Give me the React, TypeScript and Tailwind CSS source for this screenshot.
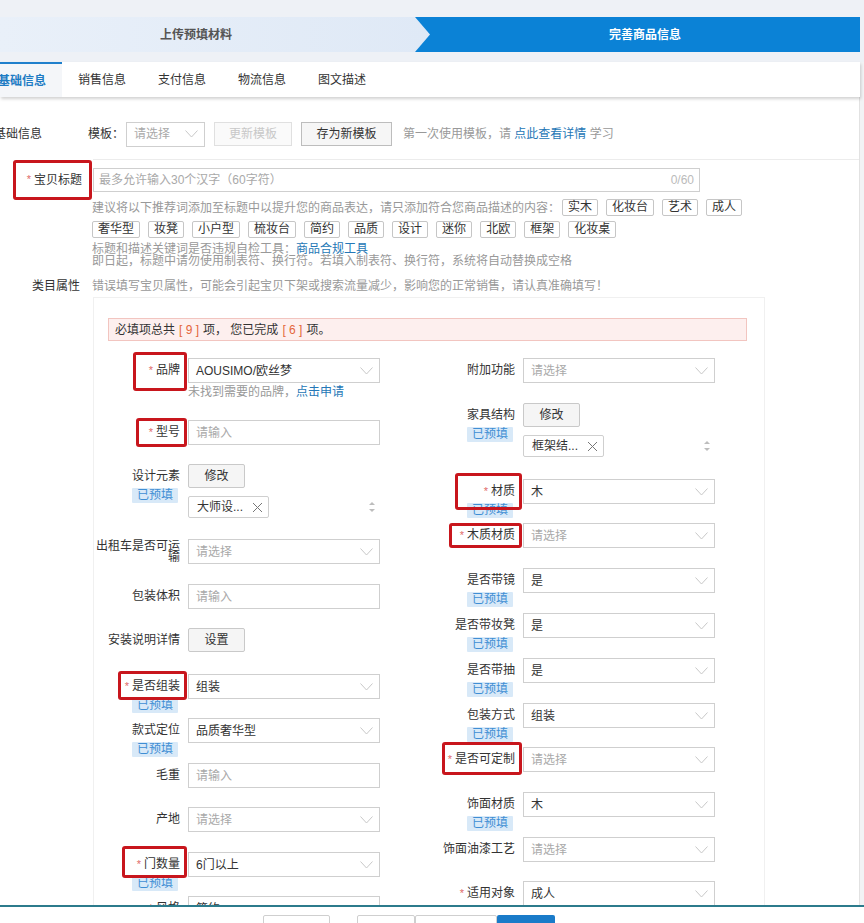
import React from "react";

type FieldDef = {
  label: string;
  req?: boolean;
  pre?: boolean;
  kind?: "select" | "input" | "button" | "multi";
  value?: string;
  btn?: string;
  tag?: string;
  note?: boolean;
  wrap?: boolean;
  h?: string;
  mark?: string;
};

const leftFields: FieldDef[] = [
  { label: "品牌", req: true, value: "AOUSIMO/欧丝梦", note: true, h: "h-[62px]", mark: "top-[-6px] h-[39px] w-[54px]" },
  { label: "型号", req: true, kind: "input", h: "h-[44px]", mark: "top-[-2px] h-[29px] w-[51px]" },
  { label: "设计元素", pre: true, kind: "multi", tag: "大师设...", h: "h-[75px]" },
  { label: "出租车是否可运输", wrap: true, h: "h-[45px]" },
  { label: "包装体积", kind: "input", h: "h-[44px]" },
  { label: "安装说明详情", kind: "button", btn: "设置", h: "h-[46px]" },
  { label: "是否组装", req: true, pre: true, value: "组装", h: "h-[44px]", mark: "top-[-3px] h-[29px] w-[69px]" },
  { label: "款式定位", pre: true, value: "品质奢华型", h: "h-[45px]" },
  { label: "毛重", kind: "input", h: "h-[44px]" },
  { label: "产地", h: "h-[45px]" },
  { label: "门数量", req: true, pre: true, value: "6门以上", h: "h-[44px]", mark: "top-[-6px] h-[32px] w-[65px]" },
  { label: "风格", req: true, value: "简约" },
];

const rightFields: FieldDef[] = [
  { label: "附加功能", h: "h-[45px]" },
  { label: "家具结构", pre: true, kind: "multi", tag: "框架结...", h: "h-[76px]" },
  { label: "材质", req: true, pre: true, value: "木", h: "h-[44px]", mark: "top-[-6px] h-[37px] w-[67px]" },
  { label: "木质材质", req: true, h: "h-[45px]", mark: "top-0 h-[25px] w-[73px]" },
  { label: "是否带镜", pre: true, value: "是", h: "h-[45px]" },
  { label: "是否带妆凳", pre: true, value: "是", h: "h-[45px]" },
  { label: "是否带抽", pre: true, value: "是", h: "h-[45px]" },
  { label: "包装方式", pre: true, value: "组装", h: "h-[44px]" },
  { label: "是否可定制", req: true, h: "h-[45px]", mark: "top-[-5px] h-[33px] w-[80px]" },
  { label: "饰面材质", pre: true, value: "木", h: "h-[45px]" },
  { label: "饰面油漆工艺", h: "h-[44px]" },
  { label: "适用对象", req: true, value: "成人" },
];

const tags1 = ["实木", "化妆台", "艺术", "成人"];
const tags2 = ["奢华型", "妆凳", "小户型", "梳妆台", "简约", "品质", "设计", "迷你", "北欧", "框架", "化妆桌"];
const tabs = ["基础信息", "销售信息", "支付信息", "物流信息", "图文描述"];

function Chevron() {
  return (
    <svg width="13" height="8" viewBox="0 0 13 8" className="shrink-0">
      <polyline points="0.5,0.5 6.5,7 12.5,0.5" fill="none" stroke="#c8c8c8" strokeWidth="1" />
    </svg>
  );
}

function Select({ value, w = "w-[192px]" }: { value?: string; w?: string }) {
  return (
    <div className={`flex h-[25px] ${w} items-center justify-between border border-[#cfcfcf] bg-white pl-[7px] pr-[6px]`}>
      <span className={value ? "text-[#333]" : "text-[#a9a9a9]"}>{value ?? "请选择"}</span>
      <Chevron />
    </div>
  );
}

function Input({ placeholder = "请输入" }: { placeholder?: string }) {
  return (
    <div className="flex h-[25px] w-[192px] items-center border border-[#cfcfcf] bg-white px-[7px] text-[#a9a9a9]">{placeholder}</div>
  );
}

function Btn({ children }: { children: React.ReactNode }) {
  return (
    <div className="flex h-[24px] w-[57px] items-center justify-center rounded-[2px] border border-[#c9c9c9] bg-[#f5f5f5] text-[#333]">
      {children}
    </div>
  );
}

function Badge() {
  return (
    <div className="-mt-[1px] flex justify-end pr-[2px]">
      <span className="h-[15px] rounded-[1px] bg-[#d8e9f8] px-[5px] text-[12px] leading-[15px] text-[#3f8ed4]">已预填</span>
    </div>
  );
}

function Field({ f }: { f: FieldDef }) {
  const kind = f.kind ?? "select";
  return (
    <div className={`flex ${f.h ?? "h-[45px]"}`}>
      <div className="relative w-[85px] shrink-0">
        <div
          className={`flex h-[25px] items-center justify-end text-right text-[#333] ${
            f.wrap ? "leading-[11px]" : "leading-[25px]"
          }`}
        >
          {f.req && <span className="mr-[3px] text-[11px] text-[#e06a6a]">*</span>}
          {f.label}
        </div>
        {f.pre && <Badge />}
        {f.mark && (
          <span
            className={`pointer-events-none absolute right-[-7px] z-10 rounded-[3px] border-[3px] border-[#c8161d] ${f.mark}`}
          />
        )}
      </div>
      <div className="ml-2 w-[192px]">
        {kind === "select" && <Select value={f.value} />}
        {kind === "input" && <Input />}
        {kind === "button" && <Btn>{f.btn}</Btn>}
        {kind === "multi" && (
          <div>
            <Btn>修改</Btn>
            <div className="mt-[8px] flex items-center justify-between">
              <div className="flex h-[22px] w-[81px] items-center justify-between rounded-[2px] border border-[#cfcfcf] bg-white pl-[8px] pr-[5px] text-[#333]">
                <span>{f.tag}</span>
                <svg width="11" height="11" viewBox="0 0 11 11">
                  <path d="M1 1L10 10M10 1L1 10" stroke="#777" strokeWidth="1" />
                </svg>
              </div>
              <svg width="8" height="14" viewBox="0 0 8 14" className="mr-[4px]">
                <path d="M4 2L7 5H1Z" fill="#bdbdbd" />
                <path d="M4 12L7 9H1Z" fill="#bdbdbd" />
              </svg>
            </div>
          </div>
        )}
        {f.note && (
          <div className="mt-[2px] leading-[14px] text-[#999]">
            未找到需要的品牌，<span className="text-[#2577b6]">点击申请</span>
          </div>
        )}
      </div>
    </div>
  );
}

function Tag({ t }: { t: string }) {
  return (
    <span className="inline-flex h-[17px] items-center rounded-[2px] border border-[#c6c6c6] bg-white px-[5px] leading-[15px] text-[#333]">
      {t}
    </span>
  );
}

export default function App() {
  return (
    <div className="flex h-[923px] w-[864px] flex-col overflow-hidden bg-[#f2f3f5] font-['Liberation_Sans','Noto_Sans_CJK_SC',sans-serif] text-[12px] text-[#333]">
      <div className="min-h-0 flex-1 overflow-hidden">
        {/* steps */}
        <div className="h-[62px] bg-[#eef1f6] pt-[17px]">
          <div className="flex h-[35px] w-[860px] bg-[#0b82d6]">
            <div className="flex w-[430px] shrink-0 items-center bg-gradient-to-r from-[#e9f0f9] to-[#dfe9f6] pl-[160px] font-semibold text-[#555] [clip-path:polygon(0_0,415px_0,430px_50%,415px_100%,0_100%)]">
              上传预填材料
            </div>
            <div className="flex flex-1 items-center justify-center font-bold text-white">完善商品信息</div>
          </div>
        </div>

        {/* tabs */}
        <div className="relative z-10 flex h-[35px] w-[860px] overflow-hidden bg-white shadow-[1px_2px_3px_rgba(0,0,0,0.18)]">
          <div className="-ml-[18px] flex">
            {tabs.map((t, i) => (
              <div
                key={t}
                className={`flex items-center px-4 ${
                  i === 0
                    ? "border-t-2 border-[#1f80cc] bg-[#f4f6f9] font-bold text-[#1e7cc4]"
                    : "text-[#333]"
                }`}
              >
                {t}
              </div>
            ))}
          </div>
        </div>

        {/* body */}
        <div className="h-[1000px] w-[860px] overflow-hidden border-r border-[#e2e2e2] bg-white pt-[25px]">
          <div className="flex h-[24px] items-center">
            <span className="-ml-[6px] w-[94px] shrink-0 whitespace-nowrap">基础信息</span>
            <span>模板：</span>
            <div className="ml-[2px]">
              <Select w="w-[79px]" />
            </div>
            <div className="ml-[9px] flex h-[24px] w-[78px] items-center justify-center border border-[#e0e0e0] bg-[#fafafa] text-[#c8c8c8]">
              更新模板
            </div>
            <div className="ml-[9px] flex h-[24px] w-[91px] items-center justify-center border border-[#bdbdbd] bg-[#f6f6f6] text-[#333]">
              存为新模板
            </div>
            <span className="ml-[11px] text-[#999]">
              第一次使用模板，请 <span className="text-[#2577b6]">点此查看详情</span> 学习
            </span>
          </div>

          <div className="ml-[93px] mt-[13px] h-px bg-[#ececec]" />

          <div className="mt-[8px] flex h-[24px] items-center">
            <div className="relative flex w-[82px] shrink-0 justify-end">
              <span className="mr-[3px] text-[11px] text-[#e06a6a]">*</span>
              宝贝标题
              <span className="pointer-events-none absolute right-[-10px] top-[-11px] h-[40px] w-[79px] rounded-[3px] border-[3px] border-[#c8161d]" />
            </div>
            <div className="ml-[11px] flex h-[24px] w-[607px] items-center justify-between border border-[#cfcfcf] px-[5px] text-[#a9a9a9]">
              <span>最多允许输入30个汉字（60字符）</span>
              <span className="text-[#bbb]">0/60</span>
            </div>
          </div>

          <div className="ml-[92px] mt-[7px] text-[#999]">
            <div className="flex h-[17px] items-center gap-[8px]">
              <span className="-mr-[6px]">建议将以下推荐词添加至标题中以提升您的商品表达，请只添加符合您商品描述的内容：</span>
              {tags1.map((t) => (
                <Tag key={t} t={t} />
              ))}
            </div>
            <div className="mt-[5px] flex h-[17px] items-center gap-[8px]">
              {tags2.map((t) => (
                <Tag key={t} t={t} />
              ))}
            </div>
            <div className="mt-[5px] leading-[12px]">
              标题和描述关键词是否违规自检工具：<span className="text-[#2577b6]">商品合规工具</span>
            </div>
            <div className="leading-[12px]">即日起，标题中请勿使用制表符、换行符。若填入制表符、换行符，系统将自动替换成空格</div>
          </div>

          <div className="mt-[13px] flex h-[12px] items-center">
            <span className="w-[80px] shrink-0 text-right">类目属性</span>
            <span className="ml-[12px] text-[#999]">错误填写宝贝属性，可能会引起宝贝下架或搜索流量减少，影响您的正常销售，请认真准确填写！</span>
          </div>

          <div className="ml-[93px] mt-[5px] w-[672px] border border-b-0 border-[#f0f0f0] pt-[20px]">
            <div className="ml-[14px] flex h-[23px] w-[639px] items-center border border-[#f2c5c0] bg-[#fdefee] pl-[6px] text-[#333]">
              必填项总共<span className="mx-[4px] text-[#e4663a]">[ 9 ]</span>项， 您已完成
              <span className="mx-[4px] text-[#e4663a]">[ 6 ]</span>项。
            </div>
            <div className="ml-[1px] mt-[17px] flex gap-[50px]">
              <div className="w-[285px]">
                {leftFields.map((f) => (
                  <Field key={f.label} f={f} />
                ))}
              </div>
              <div className="w-[286px]">
                {rightFields.map((f) => (
                  <Field key={f.label} f={f} />
                ))}
              </div>
            </div>
          </div>
        </div>
      </div>

      {/* footer */}
      <div className="h-[18px] shrink-0 overflow-hidden border-t-[2px] border-[#2c7b8c] bg-white">
        <div className="ml-[263px] mt-[8px] flex">
          <div className="h-[28px] w-[67px] rounded-[2px] border border-[#cfcfcf] bg-white" />
          <div className="ml-[27px] h-[28px] w-[58px] rounded-[2px] border border-[#cfcfcf] bg-white" />
          <div className="h-[28px] w-[82px] rounded-[2px] border border-[#cfcfcf] bg-white" />
          <div className="h-[28px] w-[58px] rounded-[2px] bg-[#1a7bc9]" />
        </div>
      </div>
    </div>
  );
}
